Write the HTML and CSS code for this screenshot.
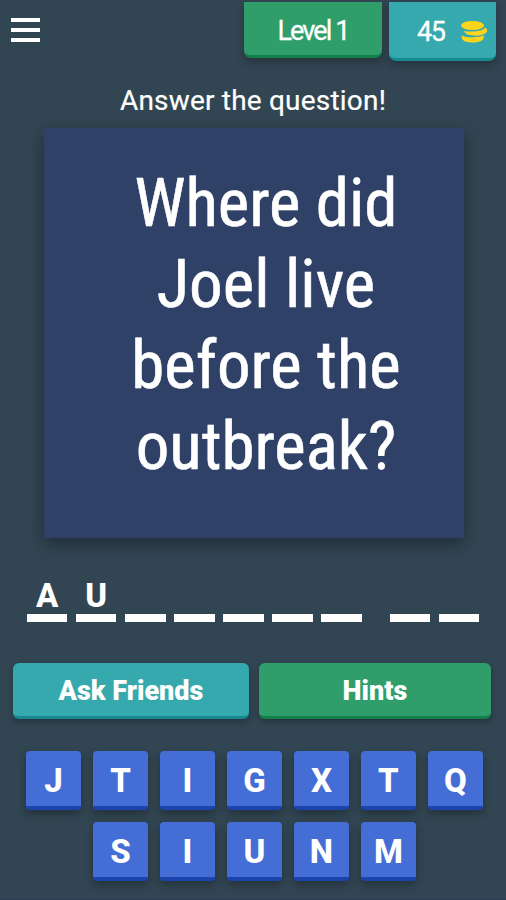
FILE: index.html
```
<!DOCTYPE html>
<html lang="en">
<head>
  <meta charset="utf-8">
  <title>Quiz</title>
  <link rel="stylesheet" href="styles.css">
</head>

<body>

<!-- top bar -->
<header class="top-bar">
  <div class="menu">
    <span></span>
    <span></span>
    <span></span>
  </div>
  <div class="tab level"><span class="level-text">Level 1</span></div>
  <div class="tab coins">
    <span class="coins-text">45</span>
    <svg class="coin-icon" width="28" height="24" viewBox="0 0 28 24">
      <ellipse cx="12.500" cy="5.500" rx="11.500" ry="4.500" fill="#ffd51c"/>
      <path d="M4 11 Q13 12.500 22 10 Q24.500 9 24.500 7.500 Q27.500 8 27.200 11 Q26 15 16 15.700 Q5 15.500 4 11Z" fill="#ffd51c"/>
      <path d="M1.500 15.500 Q7 18 14 17.300 Q20 17.200 23.800 15.500 Q25 22.500 12 22.500 Q1 22.500 1.500 15.500Z" fill="#ffd51c"/>
    </svg>
  </div>
</header>

<div class="title">Answer the question!</div>

<!-- question card -->
<div class="card">
  <div class="question">Where did<br>Joel live<br>before the<br>outbreak?</div>
</div>

<!-- answer slots -->
<div class="answer">
  <div class="slot">A</div>
  <div class="slot">U</div>
  <div class="slot"></div>
  <div class="slot"></div>
  <div class="slot"></div>
  <div class="slot"></div>
  <div class="slot"></div>
  <div class="slot new-word"></div>
  <div class="slot"></div>
</div>

<div class="buttons">
  <div class="button ask">Ask Friends</div>
  <div class="button hints">Hints</div>
</div>

<!-- letter keys -->
<div class="keys">
  <div class="key-row">
    <div class="key">J</div>
    <div class="key">T</div>
    <div class="key">I</div>
    <div class="key">G</div>
    <div class="key">X</div>
    <div class="key">T</div>
    <div class="key">Q</div>
  </div>
  <div class="key-row">
    <div class="key">S</div>
    <div class="key">I</div>
    <div class="key">U</div>
    <div class="key">N</div>
    <div class="key">M</div>
  </div>
</div>

</body>
</html>
```
FILE: styles.css
```
* {
  box-sizing: border-box;
}

body {
  margin: 0;
  height: 900px;
  overflow: hidden;
  background-color: #314552;
  border-bottom: 1px solid #2f3d58;
  font-family: Roboto, sans-serif;
  color: #ffffff;
}

/* Top bar */
.top-bar {
  display: flex;
  align-items: flex-start;
  height: 84px;
  padding: 2px 10px 0 11px;
}

.menu {
  display: flex;
  flex-direction: column;
  gap: 6px;
  width: 29px;
  margin-top: 16px;
  margin-right: auto;
}

.menu span {
  height: 4px;
  background-color: #ffffff;
}

.tab {
  display: flex;
  align-items: center;
  border-radius: 0 0 7px 7px;
  box-shadow: 0 4px 8px rgba(0, 0, 0, 0.25);
  font-size: 27px;
}

.level {
  justify-content: center;
  width: 138px;
  height: 56px;
  margin-right: 7px;
  padding-top: 4px;
  background-color: #2f9e6b;
  border-bottom: 3px solid #13804a;
  letter-spacing: -1.9px;
}

.coins {
  width: 107px;
  height: 59px;
  padding: 3px 0 0 28px;
  background-color: #35a9ad;
  border-bottom: 3px solid #178a90;
  letter-spacing: -1.5px;
}

.level-text,
.coins-text {
  -webkit-text-stroke: 0.3px #ffffff;
}

.coin-icon {
  margin-left: 16px;
}

.title {
  height: 44px;
  line-height: 33px;
  font-size: 28px;
  letter-spacing: 0.2px;
  text-align: center;
  -webkit-text-stroke: 0.2px #ffffff;
}

/* Question card */
.card {
  width: 420px;
  height: 410px;
  margin-left: 44px;
  padding: 35px 0 0 24px;
  background-color: #304168;
  box-shadow: 0 6px 16px rgba(0, 0, 0, 0.35);
}

.question {
  font-family: "Roboto Condensed", Roboto, sans-serif;
  font-stretch: 75%;
  font-size: 67px;
  line-height: 81px;
  text-align: center;
  -webkit-text-stroke: 0.6px #ffffff;
}

/* Answer slots */
.answer {
  display: flex;
  gap: 8.7px;
  margin-top: 38px;
  padding-left: 27px;
}

.slot {
  width: 40.4px;
  height: 46px;
  border-bottom: 8px solid #ffffff;
  font-size: 33px;
  font-weight: 800;
  line-height: 39px;
  text-align: center;
}

.new-word {
  margin-left: 19px;
}

/* Buttons */
.buttons {
  display: flex;
  gap: 10px;
  margin-top: 41px;
  padding-left: 13px;
}

.button {
  height: 56px;
  border-radius: 6px;
  box-shadow: 0 3px 6px rgba(0, 0, 0, 0.25);
  font-size: 27px;
  font-weight: 900;
  line-height: 56px;
  text-align: center;
}

.ask {
  width: 236px;
  background-color: #35a9ad;
  border-bottom: 3px solid #178a90;
}

.hints {
  width: 232px;
  background-color: #2f9e6b;
  border-bottom: 3px solid #13804a;
}

/* Letter keys */
.keys {
  display: flex;
  flex-direction: column;
  gap: 12px;
  width: 457px;
  margin: 32px 0 0 26px;
}

.key-row {
  display: flex;
  justify-content: center;
  gap: 11.8px;
}

.key {
  width: 55.2px;
  height: 59px;
  background-color: #446dd5;
  border-bottom: 4px solid #1b44ad;
  border-radius: 4px;
  box-shadow: 0 4px 8px rgba(0, 0, 0, 0.28);
  font-size: 33px;
  font-weight: 800;
  line-height: 60px;
  text-align: center;
}
```
